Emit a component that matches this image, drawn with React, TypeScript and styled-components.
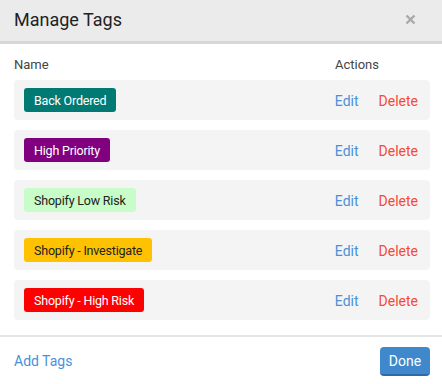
import React from 'react'
import styled, { createGlobalStyle } from 'styled-components'

const GlobalStyle = createGlobalStyle`
    html, body {
        margin: 0;
        padding: 0;
        background: #ffffff;
        font-family: Roboto, 'Noto Sans', sans-serif;
    }
`

const Modal = styled.div`
    width: 442px;
    height: 384px;
    display: flex;
    flex-direction: column;
    background: #ffffff;
    overflow: hidden;
`

const Header = styled.header`
    display: flex;
    align-items: center;
    justify-content: space-between;
    height: 38px;
    padding: 0 25px 3px 14px;
    background: #ebebeb;
    border-bottom: 3px solid #d6d6d6;
    flex-shrink: 0;
`

const Title = styled.h1`
    margin: 0;
    font-size: 18px;
    font-weight: 400;
    color: #222222;
`

const CloseButton = styled.button`
    display: flex;
    align-items: center;
    justify-content: center;
    width: 14px;
    height: 14px;
    padding: 0;
    border: none;
    background: transparent;
    cursor: pointer;
`

const Body = styled.div`
    padding: 8px 12px 15px 14px;
`

const ColumnHeads = styled.div`
    display: flex;
    justify-content: space-between;
    height: 24px;
    align-items: center;
    padding-right: 51px;
    font-size: 13px;
    color: #444444;
`

const List = styled.ul`
    list-style: none;
    margin: 4px 0 0;
    padding: 0;
    display: flex;
    flex-direction: column;
    gap: 10px;
`

const Row = styled.li`
    display: flex;
    align-items: center;
    justify-content: space-between;
    height: 40px;
    padding: 0 12px 0 10px;
    background: #f4f4f4;
    border-radius: 4px;
`

const Tag = styled.span<{ $bg: string; $fg: string }>`
    display: inline-flex;
    align-items: center;
    height: 24px;
    padding: 0 10px;
    box-sizing: border-box;
    border-radius: 3px;
    background: ${p => p.$bg};
    color: ${p => p.$fg};
    font-size: 12.5px;
    letter-spacing: -0.2px;
`

const Actions = styled.div`
    display: flex;
    gap: 20px;
    padding-top: 2px;
`

const ActionLink = styled.a<{ $danger?: boolean }>`
    font-size: 14px;
    color: ${p => (p.$danger ? '#f44a36' : '#4a90d9')};
    text-decoration: none;
    cursor: pointer;
`

const Footer = styled.footer`
    display: flex;
    flex: 1;
    align-items: center;
    justify-content: space-between;
    padding: 0 12px 0 14px;
    border-top: 2px solid #e6e6e6;
`

const AddLink = styled.a`
    font-size: 14px;
    color: #4a90d9;
    cursor: pointer;
`

const DoneButton = styled.button`
    width: 50px;
    height: 29px;
    margin-top: 2px;
    padding: 0;
    border: none;
    border-bottom: 2px solid #2d6aa5;
    border-radius: 4px;
    background: #3f88cb;
    color: #ffffff;
    font-family: Roboto, sans-serif;
    font-size: 14px;
    cursor: pointer;
`

const tags = [
    { name: 'Back Ordered', bg: '#017a73', fg: '#ffffff' },
    { name: 'High Priority', bg: '#800080', fg: '#ffffff' },
    { name: 'Shopify Low Risk', bg: '#c8fcc8', fg: '#222222' },
    { name: 'Shopify - Investigate', bg: '#ffc200', fg: '#222222' },
    { name: 'Shopify - High Risk', bg: '#ff0000', fg: '#ffffff' },
]

export default function App() {
    return (
        <Modal>
            <GlobalStyle />
            <Header>
                <Title>Manage Tags</Title>
                <CloseButton aria-label="Close">
                    <svg width="11" height="11" viewBox="0 0 11 11">
                        <path d="M1.5 1.5 L9.5 9.5 M9.5 1.5 L1.5 9.5" stroke="#a9a9a9" strokeWidth="2.4" />
                    </svg>
                </CloseButton>
            </Header>
            <Body>
                <ColumnHeads>
                    <span>Name</span>
                    <span>Actions</span>
                </ColumnHeads>
                <List>
                    {tags.map(t => (
                        <Row key={t.name}>
                            <Tag $bg={t.bg} $fg={t.fg}>{t.name}</Tag>
                            <Actions>
                                <ActionLink>Edit</ActionLink>
                                <ActionLink $danger>Delete</ActionLink>
                            </Actions>
                        </Row>
                    ))}
                </List>
            </Body>
            <Footer>
                <AddLink>Add Tags</AddLink>
                <DoneButton>Done</DoneButton>
            </Footer>
        </Modal>
    )
}
